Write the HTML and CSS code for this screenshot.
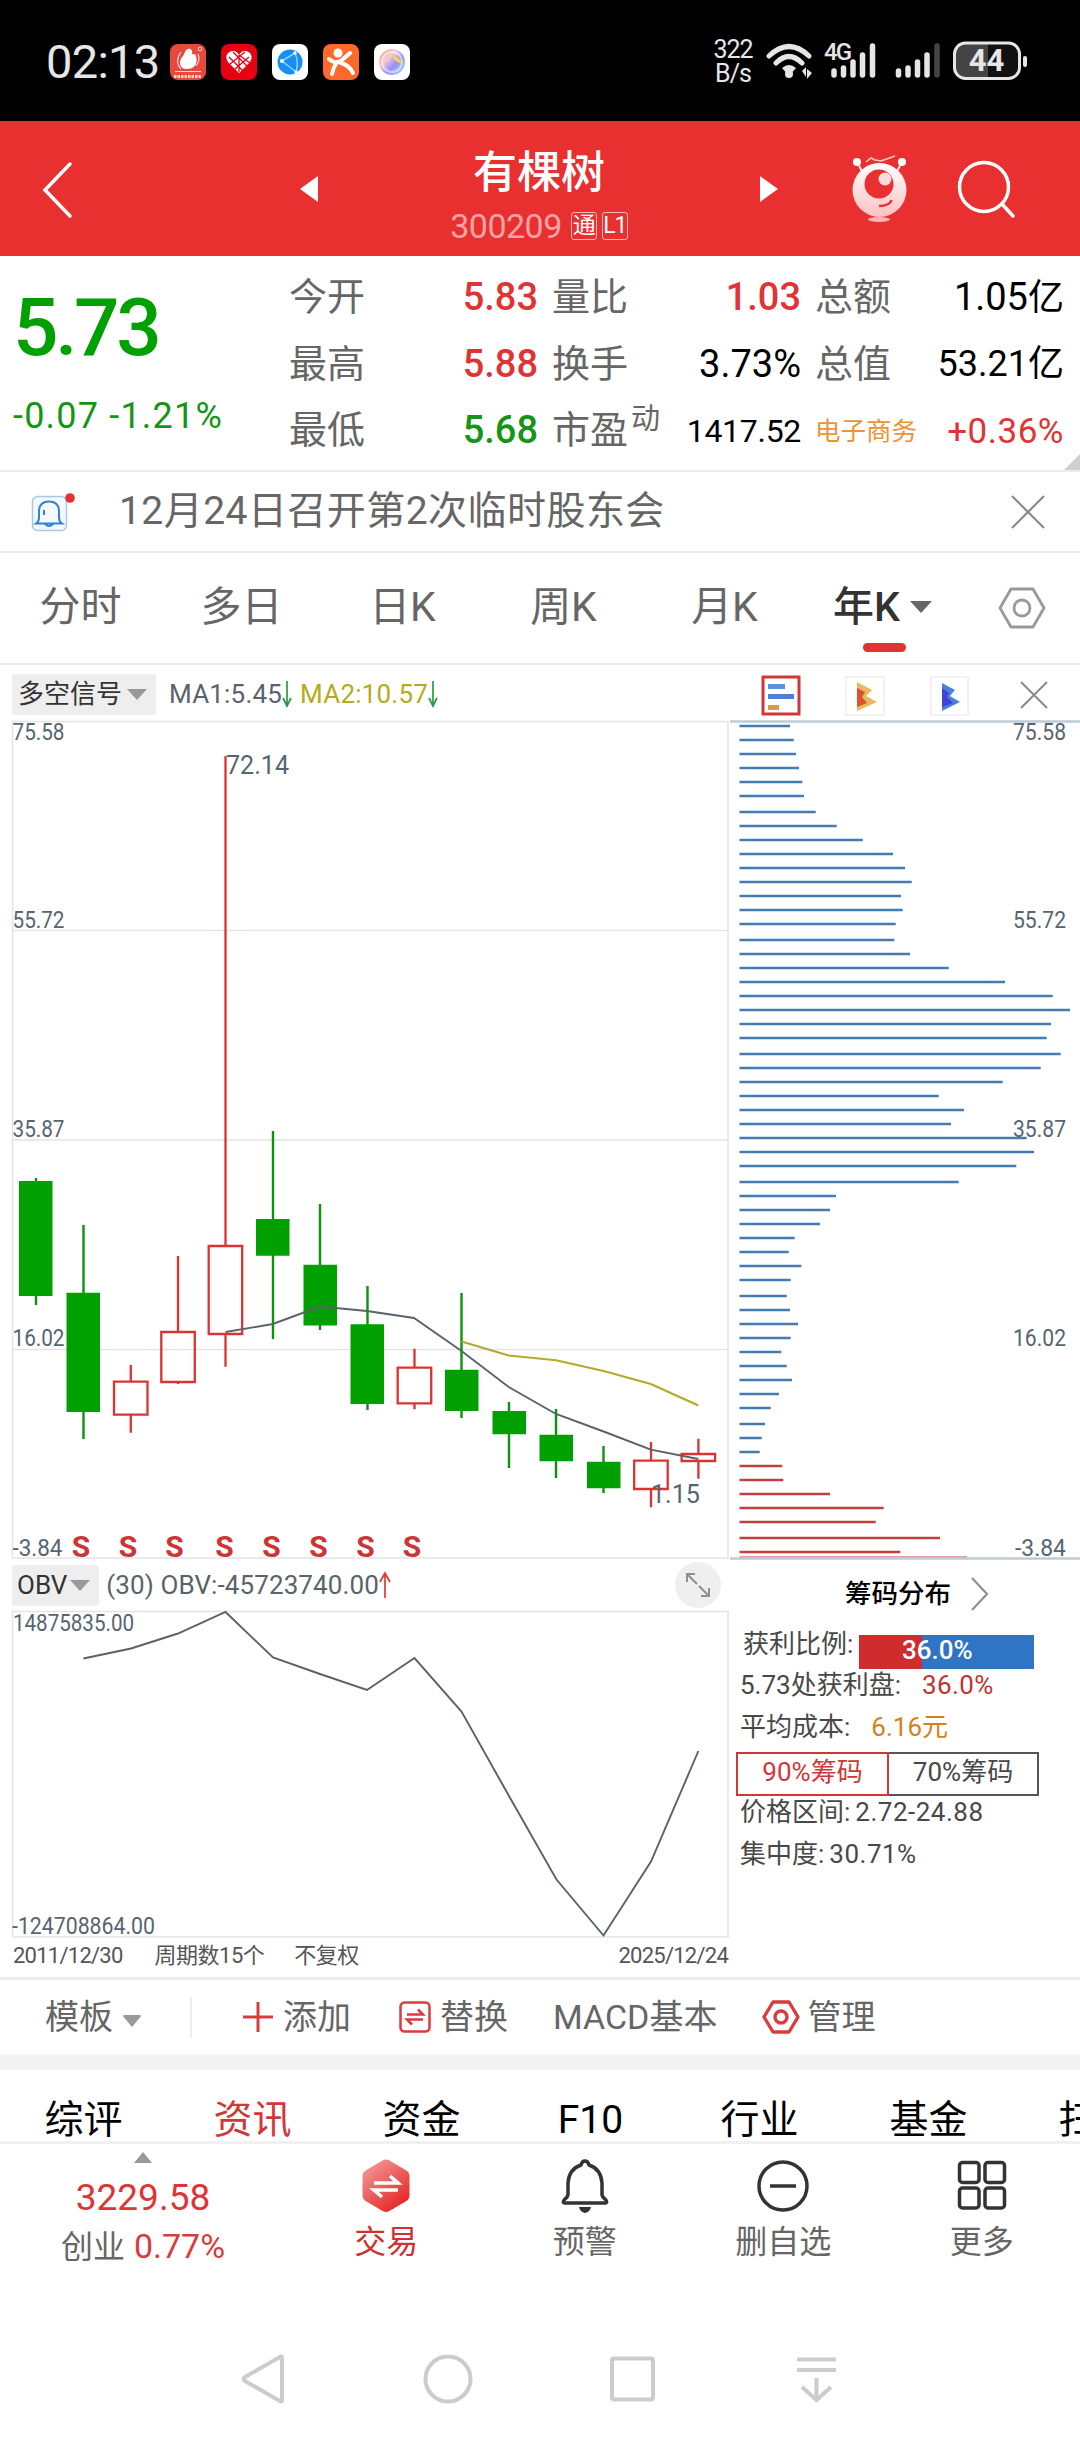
FILE: index.html
```html
<!DOCTYPE html>
<html lang="zh-CN">
<head>
<meta charset="utf-8">
<title>有棵树 300209</title>
<link rel="stylesheet" href="styles.css">
</head>
<body>
<div class="status">
  <span class="clock">02:13</span>
  <div class="apps">
    <svg width="36" height="36" viewBox="0 0 36 36"><rect width="36" height="36" rx="8" fill="#e8493f"/><path d="M18 5c-3 1-3 4-5 7-5 5-4 13 4 13 8 0 11-6 9-13-1-3-2-1-4-2 1-3-1-6-4-5z" fill="#fff"/><path d="M11 8c-4 5-5 12 0 17M26 22c3-4 4-8 2-12M5 27.500h26" fill="none" stroke="#fbd5d0" stroke-width="1.200"/><circle cx="30" cy="5" r="1.800" fill="none" stroke="#fbd5d0"/><path d="M4 32.500h28" stroke="#fbd5d0" stroke-width="3" stroke-dasharray="2.500 1"/></svg>
    <svg width="36" height="36" viewBox="0 0 36 36"><rect width="36" height="36" rx="8" fill="#e60012"/><path d="M18 29 7 18C3 12 7 7 12 7c3 0 5 2 6 4 1-2 3-4 6-4 5 0 9 5 5 11z" fill="#fff"/><path d="m8 13 14 14M12 8l14 14M18 11l11 8M28 13 14 25M24 8 9 20M18 11v17" stroke="#e60012" stroke-width="1.300"/></svg>
    <svg width="36" height="36" viewBox="0 0 36 36"><rect width="36" height="36" rx="8" fill="#fff"/><circle cx="18" cy="18" r="12.500" fill="#168ef5"/><path d="M10 17 23 9M10 17l14 11M23 9q4 9 1 19" fill="none" stroke="#8ed3ff" stroke-width="1.500"/><circle cx="10" cy="17" r="2" fill="#fff"/><circle cx="23" cy="9" r="1.700" fill="#fff"/><circle cx="24" cy="28" r="1.700" fill="#fff"/></svg>
    <svg width="36" height="36" viewBox="0 0 36 36"><rect width="36" height="36" rx="8" fill="#ff6a2b"/><circle cx="15" cy="9" r="4.500" fill="#fff"/><path d="M6 15q7 6 13 1t8-7M14 18q-4 6-5 12M18 19q8 2 12 10" fill="none" stroke="#fff" stroke-width="4" stroke-linecap="round"/></svg>
    <svg width="36" height="36" viewBox="0 0 36 36"><defs><linearGradient id="orb" x1="0" y1="0" x2="1" y2="1"><stop offset="0" stop-color="#ff9a6b"/><stop offset=".35" stop-color="#f6c9d8"/><stop offset=".6" stop-color="#9d8ff2"/><stop offset="1" stop-color="#8fe3f5"/></linearGradient></defs><rect width="36" height="36" rx="8" fill="#fff"/><circle cx="18" cy="18" r="13" fill="url(#orb)"/><circle cx="18" cy="18" r="10" fill="none" stroke="#ffffff88" stroke-width="2"/><path d="M18 11q6 2 11 8-7 1-11-8z" fill="#ffd84a"/></svg>
  </div>
  <div class="signals">
    <div class="rate"><span>322</span><span>B/s</span></div>
    <svg width="260" height="44" viewBox="762 38 260 44" class="signal-icons">
      <g fill="none" stroke="#e6e6e6" stroke-width="5" stroke-linecap="round"><path d="M768 56q20-19 40 0M775 63q13-13 26 0"/></g>
      <path d="M781 68q7-6 14 0l-7 8z" fill="#e6e6e6"/><circle cx="788" cy="74" r="4" fill="#e6e6e6"/>
      <path d="m801 71 4-4v10zM811 73l-5-4v10z" fill="#e6e6e6"/>
      <text x="823" y="60" class="net">4G</text>
      <g stroke="#e6e6e6" stroke-width="5.500" stroke-linecap="round"><path d="M833 71v4M842.500 68v7M852 62v13M861.500 55v20M871.500 46v29M897.500 71v4M907 68v7M916.500 62v13M926 55v20"/><path d="M936 46v29" stroke="#444"/></g>
      <rect x="954" y="43" width="65" height="35" rx="11" fill="#111"/><path d="M965 43h22v35h-22a11 11 0 0 1-11-11V54a11 11 0 0 1 11-11z" fill="#444"/><rect x="953.500" y="43" width="65" height="35.500" rx="11" fill="none" stroke="#e6e6e6" stroke-width="3"/>
      <text x="985.500" y="71" text-anchor="middle" class="charge">44</text>
    </svg>
    <i class="nub"></i>
  </div>
</div>

<header class="header">
  <svg class="back" width="36" height="60" viewBox="40 158 36 60"><path d="M70 163 45 189l25 26" fill="none" stroke="#fff" stroke-width="3.500" stroke-linecap="round"/></svg>
  <i class="prev"></i>
  <div class="title">
    <h1>有棵树</h1>
    <div class="code"><span>300209</span><b>通</b><b>L1</b></div>
  </div>
  <i class="next"></i>
  <svg class="robot" width="64" height="74" viewBox="848 152 64 74">
    <defs><linearGradient id="bot" x1="0" y1="0" x2="0" y2="1"><stop offset="0" stop-color="#fff"/><stop offset="1" stop-color="#ffc0c0"/></linearGradient></defs>
    <path d="m857 162 6 11M902 162l-6 11" stroke="#ffdede" stroke-width="2"/><circle cx="857" cy="162" r="4" fill="#fff"/><circle cx="902" cy="162" r="4" fill="#fff"/>
    <path d="m866 162 5-4 4 2 6 1 14-5" fill="none" stroke="#ffc9c9" stroke-width="1.600"/>
    <circle cx="879.500" cy="190" r="27" fill="url(#bot)"/><circle cx="879" cy="184" r="14.500" fill="#e83030"/><circle cx="885" cy="179" r="6.500" fill="#ffdada"/>
    <path d="M879 206q11 0 12.500-6" fill="none" stroke="#e83030" stroke-width="2.500"/><ellipse cx="879" cy="219.500" rx="11" ry="2.500" fill="#ffb3b3"/>
  </svg>
  <svg class="search" width="64" height="64" viewBox="954 156 64 64"><g fill="none" stroke="#fff" stroke-width="3.500" stroke-linecap="round"><circle cx="984" cy="186" r="24.500"/><path d="m1002 203 11 12"/></g></svg>
</header>

<section class="quote">
  <div class="last"><div class="price">5.73</div><div class="delta">-0.07 -1.21%</div></div>
  <div class="stats">
    <div class="stat"><span>今开</span><b class="up">5.83</b></div>
    <div class="stat"><span>量比</span><b class="up">1.03</b></div>
    <div class="stat"><span>总额</span><b>1.05<em>亿</em></b></div>
    <div class="stat"><span>最高</span><b class="up">5.88</b></div>
    <div class="stat"><span>换手</span><b>3.73%</b></div>
    <div class="stat"><span>总值</span><b class="narrow">53.21<em>亿</em></b></div>
    <div class="stat"><span>最低</span><b class="down">5.68</b></div>
    <div class="stat"><span>市盈<sup>动</sup></span><b class="small">1417.52</b></div>
    <div class="stat"><span class="sector">电子商务</span><b class="up change">+0.36%</b></div>
  </div>
  <i class="corner"></i>
</section>

<section class="notice">
  <svg width="50" height="46" viewBox="28 487 50 46"><rect x="32.500" y="494.500" width="34" height="34" rx="5" fill="#f4f9ff" stroke="#a9c9ea" stroke-width="1.500"/><path d="M36 521.500q3-2 3-6v-6q0-10 10-10t10 10v6q0 4 3 6zM45 522q4 4 8 0M44 508v5" fill="none" stroke="#3182cf" stroke-width="2"/><circle cx="70" cy="496" r="4.800" fill="#e23333"/></svg>
  <p>12月24日召开第2次临时股东会</p>
  <svg width="38" height="38" viewBox="0 0 38 38"><path d="m3 3 32 32M35 3 3 35" stroke="#8a8a8a" stroke-width="2.200"/></svg>
</section>

<nav class="periods">
  <span>分时</span><span>多日</span><span>日K</span><span>周K</span><span>月K</span><span class="active">年K<i></i></span>
  <svg width="52" height="48" viewBox="996 584 52 48"><path d="M1011 589h22l11 19-11 19h-22l-11-19z" fill="none" stroke="#999" stroke-width="2.800" stroke-linejoin="round"/><circle cx="1022" cy="608" r="8" fill="none" stroke="#999" stroke-width="2.800"/></svg>
</nav>

<main class="board">
  <div class="left">
    <div class="tools">
      <span class="pill">多空信号<i></i></span>
      <span class="ma1">MA1:5.45</span><svg width="10" height="28" viewBox="0 0 10 28"><path d="M5 1v25M1 18l4 8 4-8" fill="none" stroke="#2d9a48" stroke-width="1.700"/></svg>
      <span class="ma2">MA2:10.57</span><svg width="10" height="28" viewBox="0 0 10 28"><path d="M5 1v25M1 18l4 8 4-8" fill="none" stroke="#2d9a48" stroke-width="1.700"/></svg>
    </div>
    <svg class="chart" width="730" height="840" viewBox="0 720 730 840">
      <path d="M12.500 721.500H728v836.500H12.500zM12.500 930.500H728M12.500 1140H728M12.500 1349.500H728" fill="none" stroke="#e4e4e4" stroke-width="1.500"/>
      <g class="axis">
        <text x="12.500" y="740" textLength="52" lengthAdjust="spacingAndGlyphs">75.58</text>
        <text x="12.500" y="928" textLength="52" lengthAdjust="spacingAndGlyphs">55.72</text>
        <text x="12.500" y="1137" textLength="52" lengthAdjust="spacingAndGlyphs">35.87</text>
        <text x="12.500" y="1346" textLength="52" lengthAdjust="spacingAndGlyphs">16.02</text>
        <text x="12.500" y="1556" textLength="50" lengthAdjust="spacingAndGlyphs">-3.84</text>
      </g>
      <path d="M36 1178V1305M83.500 1225V1439M273 1131V1339M320 1204V1330M367.500 1286V1410M461.500 1293V1418M509 1402V1468M556 1409V1478M603.500 1446V1493" stroke="#0b940b" stroke-width="2.400"/>
      <path d="M19 1181h33.500v115H19zM66.500 1292.700H100V1412H66.500zM256 1219h33.500v36.700H256zM303.500 1264.700H337V1325.500H303.500zM350.500 1324.300H384V1404H350.500zM445 1369.700h33.500V1411H445zM492.500 1411H526v23.300h-33.500zM539.500 1434.700H573v26.600h-33.500zM587 1461.700h33.500v26.600H587z" fill="#00a000"/>
      <path d="M130.800 1365v16.700M130.800 1414.700v18M178 1256v76M178 1382v2M225.500 756v490M225.500 1334v32.700M414.500 1348.700v19M414.500 1403.300v6M651 1442v18.700M651 1489v18.300M698.400 1438.700V1454M698.400 1461v17.700M114 1381.700h33.500v33H114zM161.300 1332h33.500v50h-33.500zM208.700 1246h33.500v88h-33.500zM397.700 1367.700h33.500v35.600h-33.500zM634.200 1460.700h33.500V1489h-33.500zM681.600 1454h33.500v7h-33.500z" fill="none" stroke="#d93434" stroke-width="2.300"/>
      <path d="m225.500 1332 47.300-8 47.200-17.500 47 4.500 47 7 47.500 33 47.200 36 47.300 27 47.600 17.500 47.200 18.200 47.600 9.300" fill="none" stroke="#5a6269" stroke-width="1.900"/>
      <path d="m461.500 1341.500 47.200 14 47.300 4.800 47.600 10.700 47.200 13 47.600 21.500" fill="none" stroke="#b4aa28" stroke-width="2.100"/>
      <g class="peak"><text x="226" y="774" textLength="63" lengthAdjust="spacingAndGlyphs">72.14</text><text x="651" y="1502.500" textLength="49" lengthAdjust="spacingAndGlyphs">1.15</text></g>
      <g class="sell" text-anchor="middle"><text x="81" y="1556.500">S</text><text x="128" y="1556.500">S</text><text x="174.500" y="1556.500">S</text><text x="224.500" y="1556.500">S</text><text x="271.500" y="1556.500">S</text><text x="318.500" y="1556.500">S</text><text x="365.500" y="1556.500">S</text><text x="412" y="1556.500">S</text></g>
    </svg>
    <div class="tools obv">
      <span class="pill">OBV<i></i></span>
      <span class="ma1">(30) OBV:-45723740.00</span><svg width="12" height="28" viewBox="0 0 12 28"><path d="M6 27V2M1 11l5-9 5 9" fill="none" stroke="#e03838" stroke-width="1.700"/></svg>
      <svg class="expand" width="46" height="46" viewBox="0 0 46 46"><circle cx="23" cy="23" r="23" fill="#efefef"/><path d="m12 20v-8h8M12 12l10 10M34 26v8h-8M34 34 24 24" fill="none" stroke="#8f8f8f" stroke-width="2"/></svg>
    </div>
    <svg class="chart" width="730" height="328" viewBox="0 1610 730 328">
      <path d="M12.500 1611.500H728v325.500H12.500z" fill="none" stroke="#e4e4e4" stroke-width="1.500"/>
      <path d="m83.500 1658.500 47.500-10 47-15 47.500-21.500 47.500 45.500 47 16.500 47 16 47.500-32 47 53.500 47.500 84.500 47.500 83.500 47 56 47.500-74 47.400-110.500" fill="none" stroke="#5a6269" stroke-width="1.900"/>
      <g class="axis"><text x="13" y="1631" textLength="121" lengthAdjust="spacingAndGlyphs">14875835.00</text><text x="12" y="1934" textLength="143" lengthAdjust="spacingAndGlyphs">-124708864.00</text></g>
    </svg>
    <div class="dates"><span>2011/12/30</span><span class="count">周期数15个</span><span class="adj">不复权</span><span class="end">2025/12/24</span></div>
  </div>
  <div class="right">
    <div class="modes">
      <svg width="40" height="42" viewBox="761 674 40 42"><rect x="763" y="677" width="36" height="37" fill="#fff" stroke="#d03636" stroke-width="3"/><path d="M768 686.500h17" stroke="#5c8fdc" stroke-width="5"/><path d="M768 696.500h26" stroke="#4b82d2" stroke-width="5"/><path d="M768 707.500h11" stroke="#e09b42" stroke-width="5"/></svg>
      <svg width="40" height="42" viewBox="845 674 40 42"><rect x="846" y="677" width="38" height="38" fill="#fff" stroke="#f2f2f2" stroke-width="2"/><path d="m857 682 15 8-6 6 11 6-20 9z" fill="#e8b95d"/><path d="m857 688 8 4-3 5 5 6-10 4z" fill="#d8532f"/></svg>
      <svg width="40" height="42" viewBox="929 674 40 42"><rect x="931" y="677" width="37" height="38" fill="#fff" stroke="#f2f2f2" stroke-width="2"/><path d="m942 683 13 7-5 6 10 6-18 9z" fill="#4b82d8"/><path d="m942 688 7 5-2 4 6 6-11 4z" fill="#4440d8"/></svg>
      <svg width="28" height="28" viewBox="0 0 28 28"><path d="m1 1 26 26M27 1 1 27" stroke="#8a8a8a" stroke-width="2"/></svg>
    </div>
    <svg class="chart" width="350" height="840" viewBox="730 720 350 840">
      <path d="M739.500 726H790M739.500 740H793.700M739.500 754H796M739.500 768H799M739.500 782H802.300M739.500 796H804M739.500 812H815.700M739.500 826H836.700M739.500 840H862.700M739.500 854H893M739.500 868H905M739.500 882H911.700M739.500 896H901M739.500 910H902.700M739.500 924H895.700M739.500 940H894.300M739.500 954H910M739.500 968H948.700M739.500 982H1005M739.500 996H1052.700M739.500 1010H1070M739.500 1024H1051M739.500 1038H1046.700M739.500 1054H1060.700M739.500 1068H1040.700M739.500 1082H1002.700M739.500 1096H938.700M739.500 1110H964M739.500 1124H951M739.500 1138H1026.700M739.500 1152H1034M739.500 1166H1016.300M739.500 1182H958.700M739.500 1196H836M739.500 1210H830M739.500 1224H820M739.500 1238H794.700M739.500 1252H788.700M739.500 1266H801.300M739.500 1280H790.700M739.500 1296H786.700M739.500 1310H790M739.500 1324H798M739.500 1338H790.700M739.500 1352H781.300M739.500 1366H786.700M739.500 1380H792M739.500 1394H779M739.500 1408H770.700M739.500 1424H765M739.500 1438H761.700M739.500 1452H759.700" stroke="#447bb0" stroke-width="2.600"/>
      <path d="M739.500 1466H782.300M739.500 1480H783.300M739.500 1494H830M739.500 1508H883.700M739.500 1522H875.700M739.500 1538H940M739.500 1552H900.300" stroke="#c04040" stroke-width="2.600"/>
      <path d="M739.500 1557H967" stroke="#c04040" stroke-width="1"/>
      <path d="M730 721.500h350M730 1558.500h350" stroke="#bfcbd7" stroke-width="2.600"/>
      <g class="axis">
        <text x="1013" y="740" textLength="53" lengthAdjust="spacingAndGlyphs">75.58</text>
        <text x="1013" y="928" textLength="53" lengthAdjust="spacingAndGlyphs">55.72</text>
        <text x="1013" y="1137" textLength="53" lengthAdjust="spacingAndGlyphs">35.87</text>
        <text x="1013" y="1346" textLength="53" lengthAdjust="spacingAndGlyphs">16.02</text>
        <text x="1015" y="1556" textLength="51" lengthAdjust="spacingAndGlyphs">-3.84</text>
      </g>
    </svg>
    <div class="chips">
      <div class="chips-title">筹码分布<svg width="18" height="34" viewBox="0 0 18 34"><path d="m1 1 15 16L1 33" fill="none" stroke="#8f8f8f" stroke-width="2.200"/></svg></div>
      <div class="row ratio"><span>获利比例:</span><div class="meter">36.0%</div></div>
      <div class="row">5.73处获利盘:<b class="profit">36.0%</b></div>
      <div class="row">平均成本:<b class="cost">6.16元</b></div>
      <div class="seg"><span class="on">90%筹码</span><span>70%筹码</span></div>
      <div class="row">价格区间:<u>2.72-24.88</u></div>
      <div class="row">集中度:<u>30.71%</u></div>
    </div>
  </div>
</main>

<section class="actions">
  <span class="tpl">模板<i></i></span>
  <span class="add"><svg width="32" height="32" viewBox="0 0 32 32"><path d="M16 1v30M1 16h30" stroke="#d93c3c" stroke-width="3"/></svg>添加</span>
  <span class="swap"><svg width="32" height="32" viewBox="0 0 32 32"><rect x="1.500" y="1.500" width="29" height="29" rx="4" fill="none" stroke="#d93c3c" stroke-width="2.500"/><path d="M8 13.500h16l-5-5M24 18.500H8l5 5" fill="none" stroke="#d93c3c" stroke-width="2.500"/></svg>替换</span>
  <span class="macd">MACD基本</span>
  <span class="manage"><svg width="38" height="34" viewBox="0 0 38 34"><path d="M11 2h16l9 15-9 15H11L2 17z" fill="none" stroke="#d93c3c" stroke-width="3.400" stroke-linejoin="round"/><circle cx="19" cy="17" r="6" fill="none" stroke="#d93c3c" stroke-width="3.400"/></svg>管理</span>
</section>

<nav class="info"><span>综评</span><span class="active">资讯</span><span>资金</span><span>F10</span><span>行业</span><span>基金</span><span>扫雷</span></nav>

<footer class="bottom">
  <div class="index"><i></i><strong>3229.58</strong><p>创业<b>0.77%</b></p></div>
  <div class="item trade"><svg width="50" height="56" viewBox="0 0 50 56"><defs><linearGradient id="hex" x1="0" y1="0" x2=".7" y2="1"><stop offset="0" stop-color="#f5a3a3"/><stop offset="1" stop-color="#e52525"/></linearGradient></defs><path d="M22 2.300q3-1.500 6 0l17 10q3.500 2 3.500 6v19q0 4-3.500 6l-17 10q-3 1.500-6 0l-17-10q-3.500-2-3.500-6v-19q0-4 3.500-6z" fill="url(#hex)"/><path d="M13 25h24l-8-7M37 32H13l8 7" fill="none" stroke="#fff" stroke-width="3.600"/></svg>交易</div>
  <div class="item"><svg width="50" height="56" viewBox="0 0 50 56"><path d="M25 3q-3 0-4 4-12 4-13 18v11q0 3-3 5-4 4 1 4h38q5 0 1-4-3-2-3-5V25Q41 11 29 7q-1-4-4-4z" fill="none" stroke="#333" stroke-width="3.500"/><path d="M19 49h12q-1 5-6 6-5-1-6-6z" fill="#333"/></svg>预警</div>
  <div class="item"><svg width="54" height="56" viewBox="0 0 54 56"><circle cx="27" cy="28" r="24" fill="none" stroke="#333" stroke-width="3.500"/><path d="M14 28h26" stroke="#333" stroke-width="3.500"/></svg>删自选</div>
  <div class="item"><svg width="50" height="56" viewBox="0 0 50 56"><g fill="none" stroke="#333" stroke-width="3.500"><rect x="2.500" y="4.500" width="19.500" height="20" rx="3"/><rect x="28" y="4.500" width="19.500" height="20" rx="3"/><rect x="2.500" y="30" width="19.500" height="20" rx="3"/><rect x="28" y="30" width="19.500" height="20" rx="3"/></g></svg>更多</div>
</footer>

<div class="sysnav">
  <svg width="50" height="54" viewBox="239 2351 50 54"><path d="M282 2356v44q-1 1-2 0l-35-20q-3-2 0-4l35-20q1-1 2 0z"/></svg>
  <svg width="50" height="54" viewBox="422 2351 50 54"><circle cx="447" cy="2378" r="22.500"/></svg>
  <svg width="50" height="54" viewBox="606 2351 50 54"><rect x="611" y="2357.500" width="41" height="41" rx="2"/></svg>
  <svg width="50" height="54" viewBox="790 2351 50 54"><path d="M796 2358.500h39M796 2369h39M815.500 2377v22M801 2386l14.500 13 14.500-13"/></svg>
</div>
</body>
</html>
```

FILE: styles.css
```css
* { box-sizing: border-box; }
body { margin: 0; width: 1080px; height: 2440px; overflow: hidden; background: #fff; color: #666; font-family: Roboto, "Noto Sans CJK SC", sans-serif; line-height: 1; }
h1, p { margin: 0; font-weight: 400; }
b, em, u, i { font-style: normal; font-weight: 400; text-decoration: none; }
svg { display: block; flex: none; }
span { white-space: nowrap; }

.status { height: 121px; background: #000; display: flex; align-items: flex-start; padding: 38px 53px 0 46px; color: #e6e6e6; }
.clock { font-size: 47px; line-height: 48px; letter-spacing: -.7px; width: 124px; }
.apps { display: flex; gap: 15px; padding-top: 6px; }
.signals { display: flex; margin-left: auto; }
.rate { display: flex; flex-direction: column; align-items: center; width: 40px; margin-right: 10px; font-size: 25px; line-height: 24px; letter-spacing: -1px; }
.net { font: 500 24px Roboto, sans-serif; fill: #e6e6e6; letter-spacing: -2px; }
.charge { font: 700 31px Roboto, sans-serif; fill: #e6e6e6; }
.nub { width: 4px; height: 11px; margin-top: 18px; background: #e6e6e6; border-radius: 2px; }

.header { height: 135px; background: #e83030; color: #fff; display: flex; align-items: center; padding: 0 62px 0 40px; }
.prev, .next { border: 13px solid transparent; border-left-width: 0; border-right: 18px solid #fff; }
.prev { margin-left: 224px; }
.next { border-right-width: 0; border-left: 18px solid #fff; }
.title { width: 442px; display: flex; flex-direction: column; align-items: center; padding-top: 13px; }
.title h1 { font-size: 44px; line-height: 58px; font-weight: 500; }
.code { display: flex; align-items: center; gap: 5px; height: 44px; padding-top: 4px; font-size: 34px; color: #f7a3a3; letter-spacing: -.5px; }
.code span { margin-right: 4px; }
.code b { width: 26px; height: 28px; border: 1.500px solid #f9b5b5; border-radius: 3px; font-size: 23px; line-height: 25px; text-align: center; color: #fff; letter-spacing: -1px; }
.robot { margin: 1px 0 0 70px; }
.search { margin-left: 42px; }

.quote { position: relative; height: 216px; border-bottom: 2px solid #ececec; display: flex; }
.last { width: 289px; padding: 32px 0 0 13px; color: #00a000; }
.price { font-size: 80px; line-height: 80px; font-weight: 500; letter-spacing: -3.300px; }
.delta { font-size: 36px; line-height: 40px; margin-top: 28px; letter-spacing: 1.200px; color: #159515; white-space: nowrap; }
.stats { display: grid; grid-template-columns: repeat(3, 249px); grid-auto-rows: 66.500px; column-gap: 14px; padding-top: 8px; }
.stat { display: flex; justify-content: space-between; align-items: center; font-size: 38px; line-height: 56px; }
.stat b { color: #000; }
.stat em { font-size: 36px; }
.stat .narrow { font-size: 36px; }
.stat .small { font-size: 32px; letter-spacing: -.3px; padding-top: 1px; }
.stat .change { font-size: 35px; padding-top: 3px; letter-spacing: .5px; font-weight: 400; }
.stat .up { color: #e03434; font-weight: 500; }
.stat .down { color: #159515; font-weight: 500; }
.stat .change.up { font-weight: 400; }
.stat sup { font-size: 29px; line-height: 1; vertical-align: 14px; margin-left: 3px; }
.stat .sector { font-size: 25.500px; color: #e8953a; padding-top: 2px; }
.corner { position: absolute; right: 0; bottom: 0; border-left: 16px solid transparent; border-bottom: 16px solid #d0d0d0; }

.notice { height: 81px; border-bottom: 2px solid #ececec; display: flex; align-items: center; padding: 0 33px 0 28px; }
.notice p { flex: 1; margin: -2px 0 0 41px; font-size: 39px; line-height: 56px; letter-spacing: .45px; }

.periods { height: 112px; border-bottom: 2px solid #ececec; display: flex; align-items: center; }
.periods span { width: 161px; text-align: center; font-size: 41px; line-height: 60px; margin-top: -2px; }
.periods .active { position: relative; color: #333; font-weight: 500; width: 191px; padding-left: 28px; text-align: left; }
.periods .active i { display: inline-block; border: 11px solid transparent; border-top: 12px solid #666; border-bottom: 0; margin-left: 10px; vertical-align: 8px; }
.periods .active::after { content: ""; position: absolute; left: 58px; bottom: -15px; width: 43px; height: 9px; border-radius: 5px; background: #e23333; }
.periods svg { margin-top: -1px; }

.board { display: flex; height: 1312px; }
.left { width: 730px; }
.right { width: 350px; }
.tools { height: 55px; display: flex; align-items: center; padding: 3px 8px 0 12px; font-size: 26px; line-height: 40px; }
.pill { display: flex; align-items: center; gap: 5px; height: 41px; padding: 0 9px 0 6px; margin-right: 13px; background: #eee; border-radius: 4px; color: #333; }
.pill i { border: 10px solid transparent; border-top: 11px solid #999; border-bottom: 0; }
.ma1 { color: #59636c; letter-spacing: .2px; }
.ma2 { color: #b5ab1d; margin-left: 8px; letter-spacing: .2px; }
.axis { font: 23px Roboto, sans-serif; fill: #566572; }
.peak { font: 26px Roboto, sans-serif; fill: #566572; }
.sell { font: 700 30px Roboto, sans-serif; fill: #cc3535; }
.obv { height: 50px; padding-top: 0; }
.obv .pill { padding: 0 9px 0 5px; gap: 3px; margin-right: 7px; }
.obv .ma1 { letter-spacing: .1px; }
.expand { margin-left: auto; margin-right: 1px; }
.dates { display: flex; height: 40px; align-items: center; padding: 0 2px 4px 13px; font-size: 22px; line-height: 34px; color: #555; letter-spacing: -.75px; }
.dates .count { margin-left: 32px; letter-spacing: -.5px; }
.dates .adj { margin-left: 30px; letter-spacing: -.5px; }
.dates .end { margin-left: auto; }
.modes { display: flex; align-items: center; gap: 44px; height: 55px; padding: 4px 0 0 31px; }
.modes svg:last-child { margin-left: 7px; }
.chips { height: 416px; font-size: 26px; color: #484848; padding: 12px 0 0 6px; }
.chips-title { display: flex; align-items: center; height: 44px; padding-left: 109px; gap: 20px; font-size: 26.500px; font-weight: 500; color: #000; }
.row { height: 42px; display: flex; align-items: center; padding-left: 4px; line-height: 40px; white-space: nowrap; }
.ratio { height: 48px; padding-left: 7px; }
.ratio span { padding-top: 8px; }
.meter { width: 175px; height: 34px; margin: 24px 0 0 6px; padding-right: 19px; background: linear-gradient(90deg, #cf2d2d 36%, #3074c4 36%); color: #fff; text-align: center; line-height: 30px; font-weight: 500; }
.profit { color: #bd3434; margin-left: 21px; letter-spacing: .4px; }
.cost { color: #d58218; margin-left: 21px; }
.row u { margin-left: 5px; letter-spacing: .5px; }
.seg { display: grid; grid-template-columns: 153px 150px; height: 44px; margin: 4px 0 -5px; }
.seg span { border: 2.500px solid #555; border-left: 0; line-height: 37px; text-align: center; }
.seg .on { border: 2.500px solid #d03838; color: #d03838; }

.actions { height: 93px; border-top: 3px solid #ececec; border-bottom: 16px solid #f3f3f3; display: flex; align-items: center; padding-left: 45px; font-size: 34px; line-height: 50px; }
.actions span { display: flex; align-items: center; gap: 9px; }
.actions .tpl { width: 147px; height: 41px; border-right: 2px solid #eee; }
.actions .tpl i { border: 10.500px solid transparent; border-top: 12px solid #999; border-bottom: 0; margin-top: 8px; border-radius: 3px; }
.actions .add { margin-left: 50px; }
.actions .swap { margin-left: 48px; }
.actions .macd { margin-left: 45px; }
.actions .manage { margin-left: 45px; gap: 7px; }

.info { height: 74px; border-bottom: 3px solid #f0f0f0; display: flex; overflow: hidden; color: #000; font-size: 39px; line-height: 60px; padding-top: 20px; }
.info span { width: 169px; flex: none; text-align: center; margin-left: -1px; margin-right: 1px; }
.info .active { color: #d03838; }

.bottom { height: 150px; display: flex; font-size: 32px; line-height: 44px; }
.index { width: 286px; display: flex; flex-direction: column; align-items: center; }
.index i { border: 9.500px solid transparent; border-bottom: 11px solid #999; border-top: 0; margin-top: 8px; }
.index strong { font-size: 37px; font-weight: 400; line-height: 46px; color: #dd3535; margin-top: 12px; }
.index p { margin-top: 3px; }
.index b { font-size: 34px; margin-left: 9px; color: #d93c3c; }
.item { width: 198.500px; display: flex; flex-direction: column; align-items: center; padding: 14px 0 0 2px; }
.item svg { margin-bottom: 6px; }
.trade { color: #cc3333; }
.sysnav { display: flex; padding: 58px 0 0 172px; }
.sysnav svg { margin: 0 67px; fill: none; stroke: #ccc; stroke-width: 4; }
```
